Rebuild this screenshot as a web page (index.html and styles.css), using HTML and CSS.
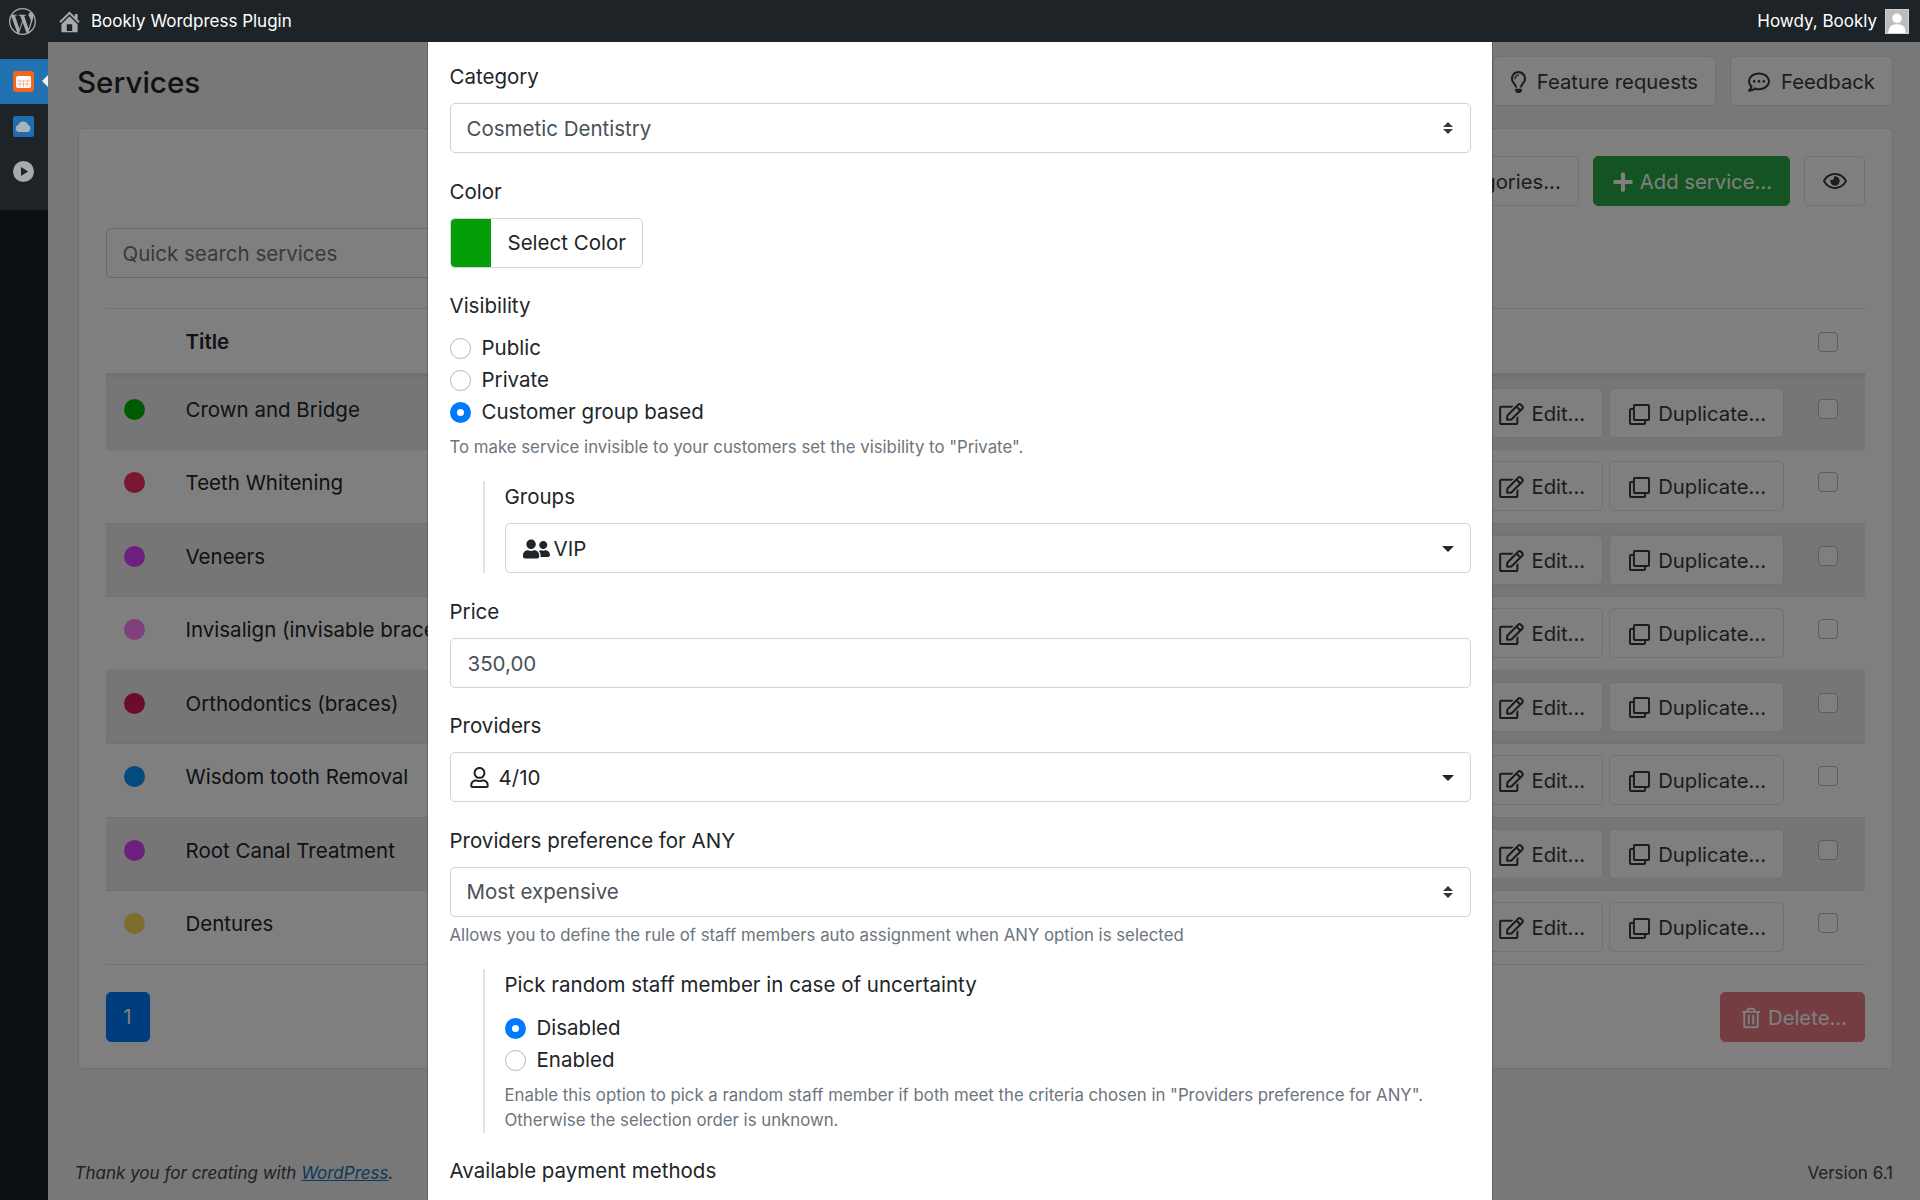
FILE: index.html
```html
<!DOCTYPE html>
<html lang="en">
<head>
    <meta charset="UTF-8">
    <meta name="viewport" content="width=device-width, initial-scale=1.0">
    <title>Services - Bookly Wordpress Plugin</title>
    <link rel="stylesheet" href="styles.css">
</head>
<body>
    <svg class="icon-defs" xmlns="http://www.w3.org/2000/svg">
        <symbol id="i-edit" viewBox="0 0 576 512"><path d="M402.3 344.9l32-32c5-5 13.7-1.5 13.7 5.7V464c0 26.5-21.5 48-48 48H48c-26.5 0-48-21.5-48-48V112c0-26.5 21.5-48 48-48h273.5c7.1 0 10.7 8.6 5.7 13.7l-32 32c-1.5 1.5-3.5 2.3-5.7 2.3H48v352h352V350.5c0-2.1.8-4.1 2.3-5.6zm156.6-201.8L296.3 405.7l-90.4 10c-26.2 2.9-48.5-19.2-45.6-45.6l10-90.4L432.9 17.1c22.9-22.9 59.9-22.9 82.7 0l43.2 43.2c22.9 22.9 22.9 60 .1 82.8zM460.1 174L402 115.9 216.2 301.8l-7.3 65.3 65.3-7.3L460.1 174zm64.8-79.7l-43.2-43.2c-4.1-4.1-10.8-4.1-14.8 0L436 82l58.1 58.1 30.9-30.9c4-4.2 4-10.8-.1-14.9z"/></symbol>
        <symbol id="i-clone" viewBox="0 0 512 512"><path d="M464 0H144c-26.51 0-48 21.49-48 48v48H48c-26.51 0-48 21.49-48 48v320c0 26.51 21.49 48 48 48h320c26.51 0 48-21.49 48-48v-48h48c26.51 0 48-21.49 48-48V48c0-26.51-21.49-48-48-48zM362 464H54a6 6 0 0 1-6-6V150a6 6 0 0 1 6-6h42v224c0 26.51 21.49 48 48 48h224v42a6 6 0 0 1-6 6zm96-96H150a6 6 0 0 1-6-6V54a6 6 0 0 1 6-6h308a6 6 0 0 1 6 6v308a6 6 0 0 1-6 6z"/></symbol>
        <symbol id="i-trash" viewBox="0 0 448 512"><path d="M268 416h24a12 12 0 0 0 12-12V188a12 12 0 0 0-12-12h-24a12 12 0 0 0-12 12v216a12 12 0 0 0 12 12zM432 80h-82.41l-34-56.7A48 48 0 0 0 274.41 0H173.59a48 48 0 0 0-41.16 23.3L98.41 80H16A16 16 0 0 0 0 96v16a16 16 0 0 0 16 16h16v336a48 48 0 0 0 48 48h288a48 48 0 0 0 48-48V128h16a16 16 0 0 0 16-16V96a16 16 0 0 0-16-16zM171.84 50.91A6 6 0 0 1 177 48h94a6 6 0 0 1 5.15 2.91L293.61 80H154.39zM368 464H80V128h288zm-212-48h24a12 12 0 0 0 12-12V188a12 12 0 0 0-12-12h-24a12 12 0 0 0-12 12v216a12 12 0 0 0 12 12z"/></symbol>
        <symbol id="i-plus" viewBox="0 0 448 512"><path d="M416 208H272V64c0-17.67-14.33-32-32-32h-32c-17.67 0-32 14.33-32 32v144H32c-17.67 0-32 14.33-32 32v32c0 17.67 14.33 32 32 32h144v144c0 17.67 14.33 32 32 32h32c17.67 0 32-14.33 32-32V304h144c17.67 0 32-14.33 32-32v-32c0-17.67-14.33-32-32-32z"/></symbol>
        <symbol id="i-eye" viewBox="0 0 576 512"><path d="M288 144a110.94 110.94 0 0 0-31.24 5 55.4 55.4 0 0 1 7.24 27 56 56 0 0 1-56 56 55.4 55.4 0 0 1-27-7.24A111.71 111.71 0 1 0 288 144zm284.52 97.4C518.29 135.59 410.93 64 288 64S57.68 135.64 3.48 241.41a32.35 32.35 0 0 0 0 29.19C57.71 376.41 165.07 448 288 448s230.32-71.64 284.52-177.41a32.35 32.35 0 0 0 0-29.19zM288 400c-98.65 0-189.09-55-237.93-144C98.91 167 189.34 112 288 112s189.09 55 237.93 144C477.1 345 386.66 400 288 400z"/></symbol>
        <symbol id="i-users" viewBox="0 0 640 512"><path d="M192 256c61.9 0 112-50.1 112-112S253.9 32 192 32 80 82.1 80 144s50.1 112 112 112zm76.8 32h-8.3c-20.8 10-43.9 16-68.5 16s-47.6-6-68.5-16h-8.3C51.6 288 0 339.6 0 403.2V432c0 26.5 21.5 48 48 48h288c26.5 0 48-21.5 48-48v-28.8c0-63.6-51.6-115.2-115.2-115.2zM480 256c53 0 96-43 96-96s-43-96-96-96-96 43-96 96 43 96 96 96zm48 32h-3.8c-13.9 4.8-28.6 8-44.2 8s-30.3-3.2-44.2-8H432c-20.4 0-39.2 5.9-55.7 15.4 24.4 26.3 39.7 61.2 39.7 99.8v38.4c0 2.2-.5 4.3-.6 6.4H592c26.5 0 48-21.5 48-48 0-61.9-50.1-112-112-112z"/></symbol>
        <symbol id="i-user" viewBox="0 0 448 512"><path d="M313.6 304c-28.7 0-42.5 16-89.6 16-47.1 0-60.8-16-89.6-16C60.2 304 0 364.2 0 438.4V464c0 26.5 21.5 48 48 48h352c26.5 0 48-21.5 48-48v-25.6c0-74.2-60.2-134.4-134.4-134.4zM400 464H48v-25.6c0-47.6 38.8-86.4 86.4-86.4 14.6 0 38.3 16 89.6 16 51.7 0 74.9-16 89.6-16 47.6 0 86.4 38.8 86.4 86.4V464zM224 288c79.5 0 144-64.5 144-144S303.5 0 224 0 80 64.5 80 144s64.5 144 144 144zm0-240c52.9 0 96 43.1 96 96s-43.1 96-96 96-96-43.1-96-96 43.1-96 96-96z"/></symbol>
        <symbol id="i-bulb" viewBox="0 0 352 512"><path d="M176 80c-52.94 0-96 43.06-96 96 0 8.84 7.16 16 16 16s16-7.16 16-16c0-35.3 28.72-64 64-64 8.84 0 16-7.16 16-16s-7.16-16-16-16zM96.06 459.17c0 3.15.93 6.22 2.68 8.84l24.51 36.84c2.97 4.46 7.97 7.14 13.32 7.14h78.85c5.36 0 10.36-2.68 13.32-7.14l24.51-36.84c1.74-2.62 2.67-5.7 2.68-8.84l.05-43.18H96.02l.04 43.18zM176 0C73.72 0 0 82.97 0 176c0 44.37 16.45 84.85 43.56 115.78 16.64 18.99 42.74 58.8 52.42 92.16v.06h48v-.12c-.01-4.77-.72-9.51-2.15-14.07-5.59-17.81-22.82-64.77-62.17-109.67-20.54-23.43-31.52-53.15-31.61-84.14-.2-73.64 59.67-128 127.95-128 70.58 0 128 57.42 128 128 0 30.97-11.24 60.85-31.65 84.14-39.11 44.61-56.42 91.47-62.1 109.46a47.507 47.507 0 0 0-2.22 14.3v.1h48v-.05c9.68-33.37 35.78-73.18 52.42-92.16C335.55 260.85 352 220.37 352 176 352 78.8 273.2 0 176 0z"/></symbol>
        <symbol id="i-comment" viewBox="0 0 512 512"><path d="M144 208c-17.7 0-32 14.3-32 32s14.3 32 32 32 32-14.3 32-32-14.3-32-32-32zm112 0c-17.7 0-32 14.3-32 32s14.3 32 32 32 32-14.3 32-32-14.3-32-32-32zm112 0c-17.7 0-32 14.3-32 32s14.3 32 32 32 32-14.3 32-32-14.3-32-32-32zM256 32C114.6 32 0 125.1 0 240c0 47.6 19.9 91.2 52.9 126.3C38 405.7 7 439.1 6.5 439.5c-6.6 7-8.4 17.2-4.6 26S14.4 480 24 480c61.5 0 110-25.7 139.1-46.3C192 442.8 223.2 448 256 448c141.4 0 256-93.1 256-208S397.4 32 256 32zm0 368c-26.7 0-53.1-4.1-78.4-12.1l-22.7-7.2-19.5 13.8c-14.3 10.1-33.9 21.4-57.5 29 7.3-12.1 14.4-25.7 19.9-40.2l10.6-28.1-20.6-21.8C69.7 314.1 48 282.2 48 240c0-88.2 93.3-160 208-160s208 71.8 208 160-93.3 160-208 160z"/></symbol>
    </svg>

    <header class="adminbar">
        <svg class="wp-logo" viewBox="0 0 24 24"><path d="M21.469 6.825c.84 1.537 1.318 3.3 1.318 5.175 0 3.979-2.156 7.456-5.363 9.325l3.295-9.527c.615-1.54.82-2.771.82-3.864 0-.405-.026-.78-.07-1.11m-7.981.105c.647-.03 1.232-.105 1.232-.105.582-.075.514-.93-.067-.899 0 0-1.755.135-2.88.135-1.064 0-2.85-.15-2.85-.15-.585-.03-.661.855-.075.885 0 0 .54.061 1.125.09l1.68 4.605-2.37 7.08L5.354 6.9c.649-.03 1.234-.1 1.234-.1.585-.075.516-.93-.065-.896 0 0-1.746.138-2.874.138-.2 0-.438-.008-.69-.015C4.911 3.15 8.235 1.215 12 1.215c2.809 0 5.365 1.072 7.286 2.833-.046-.003-.091-.009-.141-.009-1.06 0-1.812.923-1.812 1.914 0 .89.513 1.643 1.06 2.531.411.72.89 1.643.89 2.977 0 .915-.354 1.994-.821 3.479l-1.075 3.585-3.9-11.61.001.014zM12 22.784c-1.059 0-2.081-.153-3.048-.437l3.237-9.406 3.315 9.087c.024.053.05.101.078.149-1.12.393-2.325.609-3.582.609M1.211 12c0-1.564.336-3.05.935-4.39L7.29 21.709C3.694 19.96 1.212 16.271 1.211 12M12 0C5.385 0 0 5.385 0 12s5.385 12 12 12 12-5.385 12-12S18.615 0 12 0"/></svg>
        <svg class="home-icon" viewBox="0 0 20 20"><path d="M16 8.5l1.53 1.53-1.06 1.06L10 4.62l-6.47 6.47-1.06-1.06L10 2.5l4 4v-2h2v4zm-6-2.46l6 5.99V18H4v-5.97zM12 17v-5H8v5h4z"/></svg>
        <span class="site-name">Bookly Wordpress Plugin</span>
        <span class="howdy">Howdy, Bookly</span>
        <span class="avatar">
            <svg viewBox="0 0 24 25"><circle cx="12" cy="9" r="5.2"/><path d="M2.5 25c0-6 3-9.5 9.5-9.5s9.500 3.500 9.500 9.500z"/></svg>
        </span>
    </header>

    <div class="layout">
        <nav class="adminmenu">
            <div class="menu-top">
                <a class="menu-item active" href="#">
                    <svg class="menu-icon" viewBox="0 0 21 21">
                        <rect width="21" height="21" rx="3" fill="#f4651f"/>
                        <rect x="3" y="5" width="15" height="12" rx="2" fill="#fff"/>
                        <path d="M4 10h13M4 13h13M7 9v7M10.500 9v7M14 9v7" stroke="#f7b79a" stroke-width="1"/>
                    </svg>
                </a>
                <a class="menu-item" href="#">
                    <svg class="menu-icon" viewBox="0 0 21 21">
                        <rect width="21" height="21" rx="2" fill="#1f6cb0"/>
                        <path d="M6 16a3.500 3.500 0 0 1-.6-6.900 5 5 0 0 1 9.500-.5A4 4 0 0 1 15 16z" fill="#a9b3bb"/>
                    </svg>
                </a>
                <a class="menu-item" href="#">
                    <svg class="menu-icon" viewBox="0 0 21 21">
                        <circle cx="10.500" cy="10.500" r="10.500" fill="#a7aaad"/>
                        <path d="M8 6l7 4.500-7 4.500z" fill="#1d2327"/>
                    </svg>
                </a>
            </div>
        </nav>

        <main class="content">
            <div class="page-head">
                <h1>Services</h1>
                <div class="head-buttons">
                    <button class="btn"><svg class="ico ico-bulb"><use href="#i-bulb"/></svg>Feature requests</button>
                    <button class="btn"><svg class="ico ico-comment"><use href="#i-comment"/></svg>Feedback</button>
                </div>
            </div>

            <section class="card">
                <div class="toolbar">
                    <button class="btn">Categories...</button>
                    <button class="btn btn-success"><svg class="ico ico-plus"><use href="#i-plus"/></svg>Add service...</button>
                    <button class="btn btn-eye"><svg class="ico ico-eye"><use href="#i-eye"/></svg></button>
                </div>
                <input class="search" type="text" placeholder="Quick search services">

                <div class="table">
                    <div class="table-head">
                        <span class="title-head">Title</span>
                        <input class="check" type="checkbox">
                    </div>

                    <div class="row">
                        <span class="dot dot-green"></span>
                        <span class="title">Crown and Bridge</span>
                        <button class="btn"><svg class="ico ico-edit"><use href="#i-edit"/></svg>Edit...</button>
                        <button class="btn"><svg class="ico ico-clone"><use href="#i-clone"/></svg>Duplicate...</button>
                        <input class="check" type="checkbox">
                    </div>
                    <div class="row">
                        <span class="dot dot-red"></span>
                        <span class="title">Teeth Whitening</span>
                        <button class="btn"><svg class="ico ico-edit"><use href="#i-edit"/></svg>Edit...</button>
                        <button class="btn"><svg class="ico ico-clone"><use href="#i-clone"/></svg>Duplicate...</button>
                        <input class="check" type="checkbox">
                    </div>
                    <div class="row">
                        <span class="dot dot-purple"></span>
                        <span class="title">Veneers</span>
                        <button class="btn"><svg class="ico ico-edit"><use href="#i-edit"/></svg>Edit...</button>
                        <button class="btn"><svg class="ico ico-clone"><use href="#i-clone"/></svg>Duplicate...</button>
                        <input class="check" type="checkbox">
                    </div>
                    <div class="row">
                        <span class="dot dot-pink"></span>
                        <span class="title">Invisalign (invisable braces)</span>
                        <button class="btn"><svg class="ico ico-edit"><use href="#i-edit"/></svg>Edit...</button>
                        <button class="btn"><svg class="ico ico-clone"><use href="#i-clone"/></svg>Duplicate...</button>
                        <input class="check" type="checkbox">
                    </div>
                    <div class="row">
                        <span class="dot dot-maroon"></span>
                        <span class="title">Orthodontics (braces)</span>
                        <button class="btn"><svg class="ico ico-edit"><use href="#i-edit"/></svg>Edit...</button>
                        <button class="btn"><svg class="ico ico-clone"><use href="#i-clone"/></svg>Duplicate...</button>
                        <input class="check" type="checkbox">
                    </div>
                    <div class="row">
                        <span class="dot dot-blue"></span>
                        <span class="title">Wisdom tooth Removal</span>
                        <button class="btn"><svg class="ico ico-edit"><use href="#i-edit"/></svg>Edit...</button>
                        <button class="btn"><svg class="ico ico-clone"><use href="#i-clone"/></svg>Duplicate...</button>
                        <input class="check" type="checkbox">
                    </div>
                    <div class="row">
                        <span class="dot dot-purple"></span>
                        <span class="title">Root Canal Treatment</span>
                        <button class="btn"><svg class="ico ico-edit"><use href="#i-edit"/></svg>Edit...</button>
                        <button class="btn"><svg class="ico ico-clone"><use href="#i-clone"/></svg>Duplicate...</button>
                        <input class="check" type="checkbox">
                    </div>
                    <div class="row">
                        <span class="dot dot-olive"></span>
                        <span class="title">Dentures</span>
                        <button class="btn"><svg class="ico ico-edit"><use href="#i-edit"/></svg>Edit...</button>
                        <button class="btn"><svg class="ico ico-clone"><use href="#i-clone"/></svg>Duplicate...</button>
                        <input class="check" type="checkbox">
                    </div>
                </div>

                <div class="table-foot">
                    <button class="page-btn">1</button>
                    <button class="btn btn-danger"><svg class="ico ico-trash"><use href="#i-trash"/></svg>Delete...</button>
                </div>
            </section>

            <footer class="page-foot">
                <em>Thank you for creating with <a href="#">WordPress</a>.</em>
                <span>Version 6.1</span>
            </footer>
        </main>
    </div>

    <div class="backdrop"></div>

    <div class="modal">
        <div class="form-group">
            <label>Category</label>
            <div class="select-wrap">
                <select class="form-control"><option>Cosmetic Dentistry</option></select>
            </div>
        </div>

        <div class="form-group">
            <label>Color</label>
            <button class="color-btn"><span class="swatch"></span><span class="color-text">Select Color</span></button>
        </div>

        <div class="form-group">
            <label>Visibility</label>
            <label class="radio"><input type="radio" name="visibility">Public</label>
            <label class="radio"><input type="radio" name="visibility">Private</label>
            <label class="radio"><input type="radio" name="visibility" checked>Customer group based</label>
            <p class="help">To make service invisible to your customers set the visibility to "Private".</p>
            <div class="nested">
                <label class="groups-label">Groups</label>
                <button class="form-control dropdown"><svg class="ico ico-users"><use href="#i-users"/></svg>VIP</button>
            </div>
        </div>

        <div class="form-group">
            <label>Price</label>
            <input class="form-control" type="text" value="350,00">
        </div>

        <div class="form-group">
            <label>Providers</label>
            <button class="form-control dropdown"><svg class="ico ico-user"><use href="#i-user"/></svg>4/10</button>
        </div>

        <div class="form-group">
            <label>Providers preference for ANY</label>
            <div class="select-wrap">
                <select class="form-control"><option>Most expensive</option></select>
            </div>
            <p class="help">Allows you to define the rule of staff members auto assignment when ANY option is selected</p>
            <div class="nested">
                <label class="pick-label">Pick random staff member in case of uncertainty</label>
                <label class="radio"><input type="radio" name="random" checked>Disabled</label>
                <label class="radio"><input type="radio" name="random">Enabled</label>
                <p class="help">Enable this option to pick a random staff member if both meet the criteria chosen in "Providers preference for ANY".<br>Otherwise the selection order is unknown.</p>
            </div>
        </div>

        <div class="form-group">
            <label>Available payment methods</label>
        </div>
    </div>
</body>
</html>
```

FILE: styles.css
```css
* {
    box-sizing: border-box;
}
html, body {
    height: 1200px;
    overflow: hidden;
}
body {
    margin: 0;
    font-family: Inter, "Liberation Sans", sans-serif;
    font-size: 20.5px;
    line-height: 30px;
    color: #212529;
    background-color: #f0f0f1;
}
button, input, select {
    font: inherit;
}
.icon-defs {
    display: none;
}

/* admin bar */
.adminbar {
    position: relative;
    z-index: 20;
    display: flex;
    align-items: center;
    height: 42px;
    background-color: #1d2327;
    color: #fff;
    font-size: 17px;
}
.wp-logo {
    width: 27px;
    height: 27px;
    margin-left: 9px;
    fill: #a7aaad;
}
.home-icon {
    width: 27px;
    height: 27px;
    margin-left: 20px;
    fill: #a7aaad;
}
.site-name {
    margin-left: 8px;
}
.howdy {
    margin-left: auto;
}
.avatar {
    display: flex;
    width: 24px;
    height: 25px;
    margin: 0 11px 0 8px;
    background-color: #bdbdbd;
    border: 1px solid #d0d0d0;
}
.avatar svg {
    width: 100%;
    height: 100%;
    fill: #fff;
}

/* admin menu */
.layout {
    display: flex;
    height: 1158px;
}
.adminmenu {
    position: relative;
    z-index: 20;
    flex: none;
    width: 48px;
    background-color: #0c1014;
}
.menu-top {
    height: 168px;
    padding-top: 17px;
    background-color: #1d2327;
}
.menu-item {
    position: relative;
    display: flex;
    align-items: center;
    height: 45px;
    padding-left: 13px;
}
.menu-item.active {
    background-color: #2271b1;
}
.menu-item.active::after {
    content: "";
    position: absolute;
    right: 0;
    top: 16px;
    border: 6px solid transparent;
    border-left-width: 0;
    border-right-color: #f0f0f1;
}
.menu-icon {
    width: 21px;
    height: 21px;
}

/* page behind the modal */
.content {
    flex: 1;
    padding: 14px 27px 0 29.5px;
}
.page-head {
    display: flex;
    justify-content: space-between;
    align-items: center;
    height: 50px;
}
.page-head h1 {
    margin: 1px 0 0 -0.5px;
    font-size: 29.6px;
    font-weight: 500;
    line-height: 40px;
}
.head-buttons {
    display: flex;
    gap: 14px;
}
.btn {
    display: inline-flex;
    align-items: center;
    flex: none;
    height: 50px;
    padding: 2px 17px 0;
    background-color: #fff;
    border: 1px solid #dee2e6;
    border-radius: 5px;
    color: #343a40;
    font-size: 20.3px;
}
.ico {
    flex: none;
    fill: currentColor;
}
.ico-bulb {
    width: 15px;
    height: 22px;
    margin-right: 11px;
}
.ico-comment {
    width: 22px;
    height: 22px;
    margin-right: 11px;
}
.ico-plus {
    width: 20px;
    height: 22px;
    margin: 0 7px 0 2px;
}
.ico-eye {
    width: 24px;
    height: 22px;
}
.ico-edit {
    width: 25px;
    height: 22px;
    margin-right: 7px;
}
.ico-clone {
    width: 21px;
    height: 21px;
    margin: 0 8px 0 2px;
}
.ico-trash {
    width: 18px;
    height: 22px;
    margin: 0 8px 0 4px;
}
.ico-users {
    width: 27px;
    height: 22px;
    margin-right: 4px;
}
.ico-user {
    width: 19px;
    height: 21px;
    margin-right: 10px;
    margin-left: 2px;
}
.btn-success {
    background-color: #28a745;
    border-color: #28a745;
    color: #fff;
}
.btn-eye {
    justify-content: center;
    width: 61px;
    padding: 0;
}
.btn-danger {
    background-color: #dc3545;
    border-color: #dc3545;
    color: #fff;
    opacity: 0.65;
}
.card {
    height: 941px;
    margin-top: 22px;
    padding: 27px;
    background-color: #fff;
    border: 1px solid #dee2e6;
    border-radius: 5px;
}
.toolbar {
    display: flex;
    justify-content: flex-end;
    gap: 14px;
}
.search {
    display: block;
    width: 400px;
    height: 50px;
    margin-top: 22px;
    padding: 1px 16px 0;
    border: 1px solid #ced4da;
    border-radius: 5px;
}
.search::placeholder {
    color: #6c757d;
    opacity: 1;
}
.table {
    margin-top: 30px;
    border-top: 1px solid #dee2e6;
}
.table-head {
    display: flex;
    align-items: center;
    justify-content: space-between;
    height: 68px;
    padding: 1px 27px 0 80px;
    border-bottom: 4px solid #dee2e6;
}
.title-head {
    font-weight: 600;
}
.check {
    flex: none;
    width: 20px;
    height: 20px;
    margin: 0;
    appearance: none;
    background-color: #fff;
    border: 1px solid #b5bcc3;
    border-radius: 4px;
}
.row {
    display: flex;
    align-items: flex-start;
    height: 73.45px;
    padding-right: 27px;
    border-bottom: 1px solid #dee2e6;
}
.row:nth-of-type(even) {
    background-color: rgba(0, 0, 0, 0.07);
}
.dot {
    flex: none;
    width: 21px;
    height: 21px;
    margin: 22px 41px 0 18px;
    border-radius: 50%;
}
.dot-green { background-color: #00b408; }
.dot-red { background-color: #f42c62; }
.dot-purple { background-color: #dc40ff; }
.dot-pink { background-color: #ff82fa; }
.dot-maroon { background-color: #d41854; }
.dot-blue { background-color: #0694ff; }
.dot-olive { background-color: #fadd5c; }
.title {
    flex: 1;
    margin-top: 18px;
    white-space: nowrap;
}
.row .btn {
    margin: 11px 6px 0 0;
}
.row .btn:nth-of-type(2) {
    margin-right: 34px;
}
.row .check {
    margin-top: 22px;
}
.table-foot {
    display: flex;
    justify-content: space-between;
    margin-top: 27px;
}
.page-btn {
    width: 44px;
    height: 50px;
    padding: 0;
    background-color: #007bff;
    border: 1px solid #007bff;
    border-radius: 5px;
    color: #fff;
}
.page-foot {
    display: flex;
    justify-content: space-between;
    margin: 91px 0 0 -3px;
    font-size: 17px;
    line-height: 26px;
    color: #3c434a;
}
.page-foot a {
    color: #2271b1;
}

/* modal */
.backdrop {
    position: fixed;
    z-index: 10;
    left: 48px;
    top: 42px;
    right: 0;
    bottom: 0;
    background-color: rgba(0, 0, 0, 0.5);
}
.modal {
    position: fixed;
    z-index: 11;
    left: 427px;
    top: 42px;
    bottom: 0;
    width: 1066px;
    padding: 20px 21.5px 0;
    overflow: hidden;
    background-color: #fff;
    border-left: 1px solid rgba(0, 0, 0, 0.2);
    border-right: 1px solid rgba(0, 0, 0, 0.2);
    background-clip: padding-box;
}
.form-group {
    margin-bottom: 23.5px;
}
.form-group label,
.nested label {
    display: block;
    margin-bottom: 11px;
}
.form-group label.pick-label {
    margin-bottom: 12px;
}
.form-group label.groups-label {
    margin-bottom: 11.5px;
}
.form-control {
    display: block;
    width: 100%;
    height: 50px;
    padding: 1px 17px 0;
    background-color: #fff;
    border: 1px solid #ced4da;
    border-radius: 5px;
    color: #495057;
    text-align: left;
}
select.form-control {
    appearance: none;
    padding-left: 16px;
}
.select-wrap {
    position: relative;
}
.select-wrap::before,
.select-wrap::after {
    content: "";
    position: absolute;
    right: 18px;
    border-left: 5px solid transparent;
    border-right: 5px solid transparent;
}
.select-wrap::before {
    top: 19px;
    border-bottom: 5px solid #343a40;
}
.select-wrap::after {
    top: 26px;
    border-top: 5px solid #343a40;
}
.dropdown {
    display: flex;
    align-items: center;
    color: #212529;
}
.dropdown::after {
    content: "";
    margin-left: auto;
    margin-right: -1px;
    border-left: 6px solid transparent;
    border-right: 6px solid transparent;
    border-top: 6px solid #212529;
}
.color-btn {
    display: flex;
    align-items: stretch;
    width: 193px;
    height: 50px;
    padding: 0;
    overflow: hidden;
    background-color: #fff;
    border: 1px solid #ced4da;
    border-radius: 5px;
    color: #212529;
}
.swatch {
    flex: none;
    width: 40px;
    background-color: #049e07;
}
.color-text {
    align-self: center;
    margin: 1px 0 0 17px;
}
.form-group label.radio,
.nested label.radio {
    display: flex;
    align-items: center;
    height: 32px;
    margin: 0;
}
.radio input {
    flex: none;
    width: 21px;
    height: 21px;
    margin: 0 11px 0 0;
    appearance: none;
    background-color: #fff;
    border: 1px solid #adb5bd;
    border-radius: 50%;
}
.radio input:checked {
    border: 7px solid #007bff;
}
.help {
    margin: 6.5px 0 0;
    font-size: 16.8px;
    line-height: 25px;
    color: #6c757d;
}
.nested {
    margin: 21px 0 0 33px;
    padding: 1px 0 0 20px;
    border-left: 2px solid #dee2e6;
}
```
